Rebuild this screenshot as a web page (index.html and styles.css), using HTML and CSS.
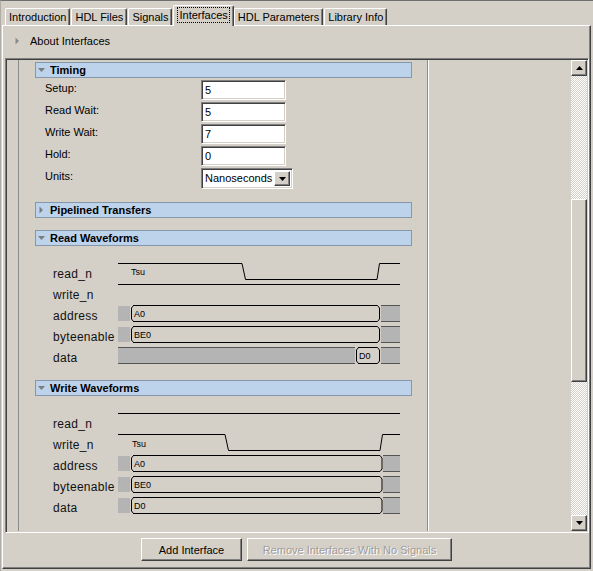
FILE: index.html
```html
<!DOCTYPE html>
<html>
<head>
<meta charset="utf-8">
<title>Interfaces</title>
<link rel="stylesheet" href="styles.css">
</head>
<body>
<div class="win">
  <div class="tabbar">
    <div class="tab">Introduction</div>
    <div class="tab">HDL Files</div>
    <div class="tab">Signals</div>
    <div class="tab sel"><span class="focus">Interfaces</span></div>
    <div class="tab">HDL Parameters</div>
    <div class="tab">Library Info</div>
  </div>
  <div class="panel">
    <div class="about">
      <svg class="tri-r" width="5" height="8" viewBox="0 0 5 8"><polygon points="0.5,0.5 4,4 0.5,7.5" fill="#8a8a8a"/></svg>
      <span>About Interfaces</span>
    </div>
    <div class="scrollpane">
      <div class="viewport">
        <div class="card">
          <div class="hdr"><svg class="hicon" width="9" height="8" viewBox="0 0 9 8"><polygon points="1,2 8,2 4.5,6" fill="#7c7c7c"/></svg><span>Timing</span></div>
          <div class="form">
            <div class="lbl">Setup:</div><div class="field">5</div>
            <div class="lbl">Read Wait:</div><div class="field">5</div>
            <div class="lbl">Write Wait:</div><div class="field">7</div>
            <div class="lbl">Hold:</div><div class="field">0</div>
            <div class="lbl">Units:</div>
            <div class="combo"><span class="ctext">Nanoseconds</span><span class="cbtn"><svg width="7" height="4" viewBox="0 0 7 4"><polygon points="0,0 7,0 3.5,4" fill="#000"/></svg></span></div>
          </div>
          <div class="hdr gap-pipe"><svg class="hicon" width="9" height="8" viewBox="0 0 9 8"><polygon points="2.5,0.5 6,4 2.5,7.5" fill="#7c7c7c"/></svg><span>Pipelined Transfers</span></div>
          <div class="hdr gap-sec"><svg class="hicon" width="9" height="8" viewBox="0 0 9 8"><polygon points="1,2 8,2 4.5,6" fill="#7c7c7c"/></svg><span>Read Waveforms</span></div>
          <div class="wave">
            <div class="names">
              <div>read_n</div><div>write_n</div><div>address</div><div>byteenable</div><div>data</div>
            </div>
            <svg class="wf" width="282" height="110" viewBox="0 0 282 110">
              <g fill="#b4b4b4">
                <rect x="0" y="49" width="12" height="15"/>
                <rect x="263" y="49" width="19" height="15"/>
                <rect x="0" y="70" width="12" height="15"/>
                <rect x="263" y="70" width="19" height="15"/>
                <rect x="0" y="91" width="237" height="15"/>
                <rect x="263" y="91" width="19" height="15"/>
              </g>
              <g fill="none" stroke="#000" stroke-width="1">
                <path d="M0 6.5H124L127.5 22.5H259L261.5 6.5H282"/>
                <path d="M0 27.5H282"/>
                <path d="M15 48.5H259.5M15 64.5H259.5M15.5 48.5L13.5 51V62L15.5 64.5M259.5 48.5L261.5 51V62L259.5 64.5"/>
                <path d="M15 69.5H259.5M15 85.5H259.5M15.5 69.5L13.5 72V83L15.5 85.5M259.5 69.5L261.5 72V83L259.5 85.5"/>
                <path d="M240 90.5H259.5M240 106.5H259.5M240.5 90.5L238.5 93V104L240.5 106.5M259.5 90.5L261.5 93V104L259.5 106.5"/>
              </g>
              <g stroke="#555" stroke-width="1" fill="none">
                <path d="M263 48.5H282M263 64.5H282M263 69.5H282M263 85.5H282M263 90.5H282M263 106.5H282M0 90.5H237M0 106.5H237"/>
              </g>
              <g class="wtxt">
                <text x="13" y="18">Tsu</text>
                <text x="16" y="60">A0</text>
                <text x="16" y="81">BE0</text>
                <text x="241" y="102">D0</text>
              </g>
            </svg>
          </div>
          <div class="hdr gap-sec2"><svg class="hicon" width="9" height="8" viewBox="0 0 9 8"><polygon points="1,2 8,2 4.5,6" fill="#7c7c7c"/></svg><span>Write Waveforms</span></div>
          <div class="wave">
            <div class="names">
              <div>read_n</div><div>write_n</div><div>address</div><div>byteenable</div><div>data</div>
            </div>
            <svg class="wf" width="282" height="110" viewBox="0 0 282 110">
              <g fill="#b4b4b4">
                <rect x="0" y="49" width="12" height="15"/>
                <rect x="265" y="49" width="17" height="15"/>
                <rect x="0" y="70" width="12" height="15"/>
                <rect x="265" y="70" width="17" height="15"/>
                <rect x="0" y="91" width="12" height="15"/>
                <rect x="265" y="91" width="17" height="15"/>
              </g>
              <g fill="none" stroke="#000" stroke-width="1">
                <path d="M0 6.5H282"/>
                <path d="M0 27.5H107L110.5 43.5H262L264.5 27.5H282"/>
                <path d="M15 48.5H262M15 64.5H262M15.5 48.5L13.5 51V62L15.5 64.5M262 48.5L264 51V62L262 64.5"/>
                <path d="M15 69.5H262M15 85.5H262M15.5 69.5L13.5 72V83L15.5 85.5M262 69.5L264 72V83L262 85.5"/>
                <path d="M15 90.5H262M15 106.5H262M15.5 90.5L13.5 93V104L15.5 106.5M262 90.5L264 93V104L262 106.5"/>
              </g>
              <g stroke="#555" stroke-width="1" fill="none">
                <path d="M265 48.5H282M265 64.5H282M265 69.5H282M265 85.5H282M265 90.5H282M265 106.5H282"/>
              </g>
              <g class="wtxt">
                <text x="14" y="40">Tsu</text>
                <text x="16" y="60">A0</text>
                <text x="16" y="81">BE0</text>
                <text x="16" y="102">D0</text>
              </g>
            </svg>
          </div>
        </div>
      </div>
      <div class="vscroll">
        <div class="sbtn"><svg width="7" height="4" viewBox="0 0 7 4"><polygon points="3.5,0 7,4 0,4" fill="#000"/></svg></div>
        <div class="track"><div class="thumb"></div></div>
        <div class="sbtn"><svg width="7" height="4" viewBox="0 0 7 4"><polygon points="0,0 7,0 3.5,4" fill="#000"/></svg></div>
      </div>
    </div>
    <div class="buttons">
      <button class="btn btn-add" type="button">Add Interface</button>
      <button class="btn btn-remove" type="button" disabled>Remove Interfaces With No Signals</button>
    </div>
  </div>
</div>
</body>
</html>
```

FILE: styles.css
```css
* { box-sizing: border-box; }
html, body { margin: 0; padding: 0; }
body {
  width: 593px;
  height: 571px;
  overflow: hidden;
  background: #d4d0c8;
  font-family: "Liberation Sans", Arial, sans-serif;
  font-size: 11px;
  color: #000;
}
.win {
  width: 593px;
  height: 571px;
  border-top: 1px solid #707070;
  border-left: 1px solid #b0aca4;
  display: flex;
  flex-direction: column;
}

/* tabs */
.tabbar {
  height: 24px;
  display: flex;
  align-items: flex-end;
  padding-left: 4px;
  flex: none;
}
.tab {
  height: 17px;
  line-height: 16px;
  padding: 0 3px;
  margin-right: 1px;
  border-top: 1px solid #fff;
  border-left: 1px solid #fff;
  border-right: 1px solid #404040;
  box-shadow: inset -1px 0 0 #808080;
  border-top-left-radius: 2px;
  border-top-right-radius: 2px;
  white-space: nowrap;
}
.tab.sel {
  height: 21px;
  margin-bottom: -1px;
  margin-left: 0;
  margin-right: 0;
  padding: 1px 4px 0 4px;
  position: relative;
  z-index: 1;
  background: #d4d0c8;
}
.focus {
  display: inline-block;
  outline: 1px dotted #000;
  padding: 0 1px;
  line-height: 14px;
}

/* panel */
.panel {
  flex: none;
  height: 544px;
  margin: 0 2px 2px 1px;
  border-top: 1px solid #fff;
  border-left: 1px solid #fff;
  border-right: 1px solid #404040;
  border-bottom: 1px solid #404040;
  box-shadow: inset -1px -1px 0 #808080;
  display: flex;
  flex-direction: column;
}
.about {
  height: 32px;
  display: flex;
  align-items: center;
  padding: 0 0 3px 12px;
  flex: none;
}
.tri-r { margin-right: 10px; }

.scrollpane {
  flex: none;
  margin-left: 2px;
  width: 584px;
  height: 475px;
  border-top: 1px solid #808080;
  border-left: 1px solid #808080;
  border-right: 1px solid #fff;
  border-bottom: 1px solid #fff;
  padding: 1px;
  box-shadow: inset 1px 1px 0 #404040;
  display: flex;
}
.viewport {
  flex: 1;
  overflow: hidden;
}
.card {
  margin-left: 11px;
  width: 411px;
  height: 100%;
  border-left: 1px solid #8c8c8c;
  border-right: 1px solid #fff;
  box-shadow: inset -1px 0 0 #8c8c8c;
  padding-top: 2px;
}

/* section headers */
.hdr {
  margin-left: 16px;
  width: 377px;
  height: 16px;
  border: 1px solid #8497ab;
  background: #bdd3ec;
  display: flex;
  align-items: center;
  padding-left: 1px;
  font-weight: bold;
  font-size: 11px;
}
.hicon { margin-right: 4px; flex: none; }
.gap-pipe { margin-top: 13px; }
.gap-sec { margin-top: 12px; }
.gap-sec2 { margin-top: 13px; }

/* form */
.form {
  margin-top: 2px;
  padding-left: 26px;
  display: grid;
  grid-template-columns: 156px auto;
  row-gap: 2px;
  justify-items: start;
}
.lbl {
  line-height: 14px;
  padding-top: 1px;
  align-self: start;
}
.field {
  width: 85px;
  height: 20px;
  background: #fff;
  border-top: 1px solid #808080;
  border-left: 1px solid #808080;
  border-right: 1px solid #fff;
  border-bottom: 1px solid #fff;
  box-shadow: inset 1px 1px 0 #404040, inset -1px -1px 0 #d4d0c8;
  padding-left: 3px;
  line-height: 18px;
}
.combo {
  width: 92px;
  height: 21px;
  background: #fff;
  border-top: 1px solid #808080;
  border-left: 1px solid #808080;
  border-right: 1px solid #fff;
  border-bottom: 1px solid #fff;
  box-shadow: inset 1px 1px 0 #404040, inset -1px -1px 0 #d4d0c8;
  padding: 2px 2px 2px 3px;
  display: flex;
  align-items: center;
  justify-content: space-between;
}
.ctext { line-height: 15px; }
.cbtn {
  width: 16px;
  height: 15px;
  background: #d4d0c8;
  border-top: 1px solid #fff;
  border-left: 1px solid #fff;
  border-right: 1px solid #404040;
  border-bottom: 1px solid #404040;
  box-shadow: inset -1px -1px 0 #808080;
  display: flex;
  align-items: center;
  justify-content: center;
}

/* waveforms */
.wave {
  margin-top: 11px;
  display: flex;
  height: 110px;
}
.names {
  width: 99px;
  padding: 7px 0 0 34px;
  font-size: 12px;
  line-height: 21px;
  letter-spacing: 0.3px;
  color: #111;
  flex: none;
}
.wf { display: block; flex: none; }
.wtxt {
  font-family: "Liberation Sans", Arial, sans-serif;
  font-size: 9px;
  fill: #000;
}

/* scrollbar */
.vscroll {
  width: 16px;
  flex: none;
  display: flex;
  flex-direction: column;
}
.sbtn {
  height: 16px;
  flex: none;
  background: #d4d0c8;
  border-top: 1px solid #fff;
  border-left: 1px solid #fff;
  border-right: 1px solid #404040;
  border-bottom: 1px solid #404040;
  box-shadow: inset -1px -1px 0 #808080;
  display: flex;
  align-items: center;
  justify-content: center;
}
.track {
  flex: 1;
  background: repeating-conic-gradient(#ffffff 0 25%, #d4d0c8 0 50%) 0 0 / 2px 2px;
  display: flex;
  flex-direction: column;
}
.thumb {
  margin-top: 123px;
  height: 183px;
  background: #d4d0c8;
  border-top: 1px solid #fff;
  border-left: 1px solid #fff;
  border-right: 1px solid #404040;
  border-bottom: 1px solid #404040;
  box-shadow: inset -1px -1px 0 #808080;
}

/* buttons */
.buttons {
  flex: 1;
  display: flex;
  justify-content: center;
  align-items: flex-start;
  gap: 5px;
  padding-top: 5px;
}
.btn {
  height: 23px;
  font-family: "Liberation Sans", Arial, sans-serif;
  font-size: 11px;
  color: #000;
  background: #d4d0c8;
  border-top: 1px solid #fff;
  border-left: 1px solid #fff;
  border-right: 1px solid #404040;
  border-bottom: 1px solid #404040;
  box-shadow: inset -1px -1px 0 #808080;
  padding: 0;
  margin: 0;
  text-align: center;
  border-radius: 0;
}
.btn-add { width: 101px; }
.btn-remove { width: 205px; }
.btn:disabled {
  color: #a09c98;
  text-shadow: 1px 1px 0 #fff;
}
```
